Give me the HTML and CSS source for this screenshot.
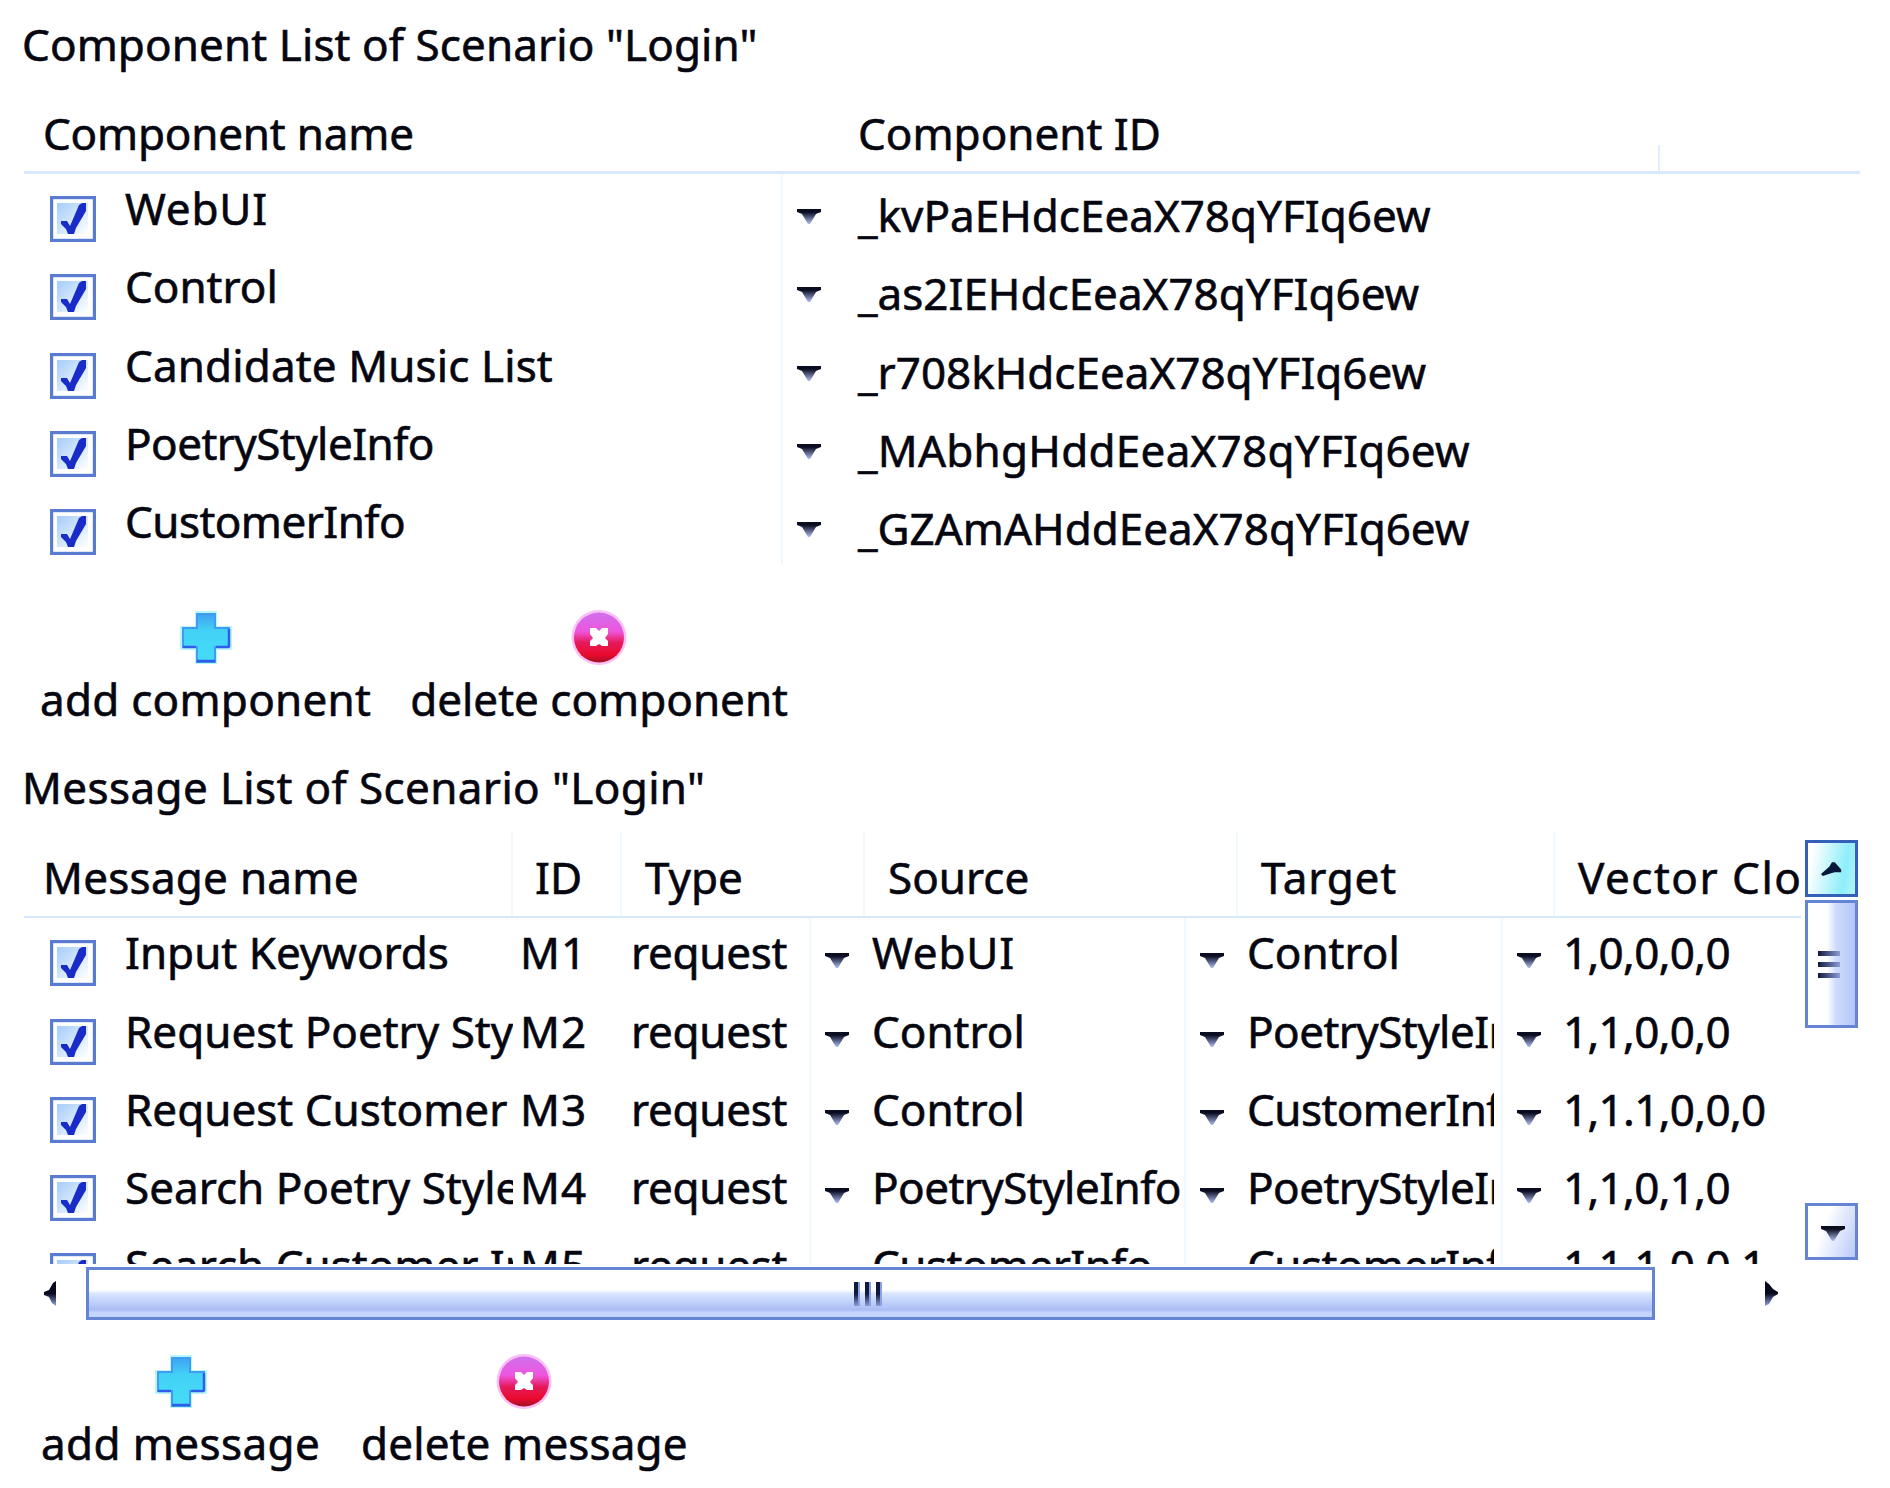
FILE: index.html
```
<!DOCTYPE html>
<html lang="en">
<head>
    <meta charset="UTF-8">
    <title>Scenario "Login"</title>
    <link rel="stylesheet" href="styles.css">
</head>
<body>
    <!-- Shared icons -->
    <svg class="defs" width="0" height="0">
        <defs>
            <linearGradient id="boxFill" x1="0" y1="0" x2="1" y2="1">
                <stop offset="0" stop-color="#a4ccfa"/>
                <stop offset="1" stop-color="#fff"/>
            </linearGradient>
            <linearGradient id="plusFill" x1="0" y1="0" x2="0" y2="1">
                <stop offset="0" stop-color="#3fa2f4"/>
                <stop offset="0.35" stop-color="#43d2f5"/>
                <stop offset="1" stop-color="#45dcf8"/>
            </linearGradient>
            <linearGradient id="crossFill" x1="0" y1="0" x2="0" y2="1">
                <stop offset="0" stop-color="#cf70ee"/>
                <stop offset="0.38" stop-color="#ee55dd"/>
                <stop offset="0.6" stop-color="#e51a5c"/>
                <stop offset="0.85" stop-color="#ea0a2c"/>
                <stop offset="1" stop-color="#a01028"/>
            </linearGradient>
            <linearGradient id="arrowFill" x1="0" y1="0" x2="0" y2="1">
                <stop offset="0.2" stop-color="#0a0c20"/>
                <stop offset="1" stop-color="#b0bef6"/>
            </linearGradient>
            <linearGradient id="sideFill" x1="0" y1="0" x2="0" y2="1">
                <stop offset="0.5" stop-color="#060a1c"/>
                <stop offset="1" stop-color="#93a6ee"/>
            </linearGradient>
        </defs>
        <symbol id="check" viewBox="0 0 46 46">
            <rect x="1.5" y="1.5" width="43" height="43" fill="#fff" stroke="#5a7cd0" stroke-width="3.4"/>
            <rect x="7" y="7" width="31" height="31" fill="url(#boxFill)"/>
            <path d="M11 25h6l3 5L29 9l3-2h4v8L26 32l-2 6h-6l-2-5-5-5z" fill="#1a2cc8"/>
        </symbol>
        <symbol id="down" viewBox="0 0 26 15">
            <path d="M1 0h24v3l-5 2-6 10h-2L6 5 1 3z" fill="url(#arrowFill)"/>
        </symbol>
        <symbol id="plus" viewBox="0 0 56 57">
            <path d="M17 2h22v15h15v24H39v14H17V41H2V17h15z" fill="#b9f6fb"/>
            <path d="M19 5h18v14h14v19H37v15H19V38H5V19h14z" fill="url(#plusFill)" stroke="#3f9cf0" stroke-width="2"/>
            <path d="M19 52h18M5 38h13M38 38h13M51 20v18" fill="none" stroke="#2f5cea" stroke-width="2.5"/>
        </symbol>
        <symbol id="cross" viewBox="0 0 56 57">
            <circle cx="28" cy="28.5" r="27.5" fill="#fbc0f6"/>
            <circle cx="28" cy="28.5" r="25" fill="url(#crossFill)"/>
            <path d="M19 19h6l3 3 3-3h6v6l-3 4 3 3v5h-6l-3-2-3 2h-6v-5l3-3-3-4z" fill="#fff"/>
        </symbol>
    </svg>

    <section class="components">
        <h1>Component List of Scenario "Login"</h1>
        <div class="head comp-head">
            <span>Component name</span>
            <span>Component ID</span>
            <span></span>
        </div>
        <div class="comp-row"><svg class="check"><use href="#check"/></svg><span class="w4">WebUI</span><i><svg class="down"><use href="#down"/></svg></i><span class="uid">_kvPaEHdcEeaX78qYFIq6ew</span></div>
        <div class="comp-row"><svg class="check"><use href="#check"/></svg><span>Control</span><i><svg class="down"><use href="#down"/></svg></i><span class="uid">_as2IEHdcEeaX78qYFIq6ew</span></div>
        <div class="comp-row"><svg class="check"><use href="#check"/></svg><span class="w1">Candidate Music List</span><i><svg class="down"><use href="#down"/></svg></i><span class="uid">_r708kHdcEeaX78qYFIq6ew</span></div>
        <div class="comp-row"><svg class="check"><use href="#check"/></svg><span class="n2">PoetryStyleInfo</span><i><svg class="down"><use href="#down"/></svg></i><span class="uid w2">_MAbhgHddEeaX78qYFIq6ew</span></div>
        <div class="comp-row"><svg class="check"><use href="#check"/></svg><span class="n2">CustomerInfo</span><i><svg class="down"><use href="#down"/></svg></i><span class="uid">_GZAmAHddEeaX78qYFIq6ew</span></div>
        <div class="tools">
            <div class="tool"><svg><use href="#plus"/></svg><span class="w2">add component</span></div>
            <div class="tool"><svg><use href="#cross"/></svg><span>delete component</span></div>
        </div>
    </section>

    <section class="messages">
        <h1 class="w3">Message List of Scenario "Login"</h1>
        <div class="list">
            <div class="view">
                <div class="head msg-head">
                    <span class="w2">Message name</span>
                    <span>ID</span>
                    <span>Type</span>
                    <span>Source</span>
                    <span class="w4">Target</span>
                    <span class="vc">Vector Clock</span>
                </div>
                <div class="rows">
                    <div class="msg-row"><svg class="check"><use href="#check"/></svg><span class="name">Input Keywords</span><span class="mid">M1</span><span class="type">request</span><i><svg class="down"><use href="#down"/></svg></i><span class="w4">WebUI</span><i><svg class="down"><use href="#down"/></svg></i><span class="target">Control</span><i><svg class="down"><use href="#down"/></svg></i><span class="clock">1,0,0,0,0</span></div>
                    <div class="msg-row"><svg class="check"><use href="#check"/></svg><span class="name">Request Poetry Style</span><span class="mid">M2</span><span class="type">request</span><i><svg class="down"><use href="#down"/></svg></i><span>Control</span><i><svg class="down"><use href="#down"/></svg></i><span class="target n2">PoetryStyleInfo</span><i><svg class="down"><use href="#down"/></svg></i><span class="clock">1,1,0,0,0</span></div>
                    <div class="msg-row"><svg class="check"><use href="#check"/></svg><span class="name">Request Customer Info</span><span class="mid">M3</span><span class="type">request</span><i><svg class="down"><use href="#down"/></svg></i><span>Control</span><i><svg class="down"><use href="#down"/></svg></i><span class="target n2">CustomerInfo</span><i><svg class="down"><use href="#down"/></svg></i><span class="clock">1,1.1,0,0,0</span></div>
                    <div class="msg-row"><svg class="check"><use href="#check"/></svg><span class="name">Search Poetry Style</span><span class="mid">M4</span><span class="type">request</span><i><svg class="down"><use href="#down"/></svg></i><span class="n2">PoetryStyleInfo</span><i><svg class="down"><use href="#down"/></svg></i><span class="target n2">PoetryStyleInfo</span><i><svg class="down"><use href="#down"/></svg></i><span class="clock">1,1,0,1,0</span></div>
                    <div class="msg-row"><svg class="check"><use href="#check"/></svg><span class="name">Search Customer Info</span><span class="mid">M5</span><span class="type">request</span><i></i><span class="n2">CustomerInfo</span><i></i><span class="target n2">CustomerInfo</span><i></i><span class="clock">1,1,1,0,0,1</span></div>
                </div>
            </div>
            <div class="vscroll">
                <div class="btn up"><svg width="22" height="14" viewBox="0 0 24 15"><path d="M0 13l9-8 3-5h3l7 8v3h-7l-4 1-9 3z" fill="#06183c"/></svg></div>
                <div class="vthumb"><b></b><b></b><b></b></div>
                <div class="btn dn"><svg class="down"><use href="#down"/></svg></div>
            </div>
        </div>
        <div class="hscroll">
            <svg class="left" viewBox="0 0 14 25"><path d="M13 0v25l-4-3-3-6-5-2v-3l5-2 4-7z" fill="url(#sideFill)"/></svg>
            <div class="hthumb"><b></b><b></b><b></b></div>
            <svg class="right" viewBox="0 0 14 25"><path d="M0 0v25l4-2 4-7 5-3v-2L8 8 4 3z" fill="url(#sideFill)"/></svg>
        </div>
        <div class="tools msg-tools">
            <div class="tool"><svg><use href="#plus"/></svg><span class="w3">add message</span></div>
            <div class="tool"><svg><use href="#cross"/></svg><span class="w1">delete message</span></div>
        </div>
    </section>
</body>
</html>
```
FILE: styles.css
```
* {
    box-sizing: border-box;
}
body {
    margin: 0;
    width: 1890px;
    height: 1488px;
    overflow: hidden;
    background: #fff;
    color: #05060f;
    font: 44px/69px "Noto Sans", sans-serif;
    -webkit-text-stroke: 0.6px #05060f;
    white-space: nowrap;
}
svg {
    display: block;
}
.defs {
    position: absolute;
}
h1 {
    margin: 0;
    padding-left: 22px;
    font-size: 44px;
    font-weight: normal;
    line-height: 88px;
    letter-spacing: 0.1px;
}

/* tracking */
.w1 {
    letter-spacing: 0.12px;
}
.w2 {
    letter-spacing: 0.25px;
}
.w3 {
    letter-spacing: 0.38px;
}
.w4 {
    letter-spacing: 0.8px;
}
.n2 {
    letter-spacing: -0.55px;
}

.head {
    display: grid;
    margin-left: 24px;
    line-height: 91px;
}
.comp-head {
    grid-template-columns: 810px 824px 202px;
    width: 1836px;
    height: 86px;
    border-bottom: 3px solid #d8e8ff;
}
.comp-head span {
    padding-left: 19px;
    letter-spacing: -0.2px;
}
.comp-head span + span {
    padding-left: 24px;
    letter-spacing: 0;
}
.comp-head span:last-child {
    height: 26px;
    margin-top: 57px;
    border-left: 2px solid #e2eeff;
}
.comp-row {
    display: grid;
    grid-template-columns: 125px 656px 77px 1fr;
    height: 78.25px;
}
.check {
    width: 46px;
    height: 46px;
    margin: 22px 0 0 50px;
}
i {
    padding: 35px 0 0 13px;
    border-left: 2px solid #f0f9ff;
}
.down {
    width: 26px;
    height: 15px;
}
.uid {
    padding-top: 7px;
}
.tools {
    display: flex;
    gap: 39px;
    padding: 44px 0 0 40px;
    line-height: 66px;
}
.tool {
    display: flex;
    flex-direction: column;
    align-items: center;
}
.tool svg {
    width: 56px;
    height: 57px;
}
.messages {
    margin-top: 11px;
}
.messages h1 {
    height: 88px;
    line-height: 89px;
}
.list {
    display: flex;
}
.view {
    width: 1805px;
    height: 433px;
    overflow: hidden;
}
.msg-head {
    grid-template-columns: 487px 109px 243px 373px 317px 248px;
    height: 87px;
    width: 1777px;
    line-height: 93px;
    border-bottom: 2px solid #d8e8ff;
    overflow: hidden;
}
.msg-head span {
    padding-left: 22px;
    border-left: 2px solid #f0f9ff;
}
.msg-head span:first-child {
    padding-left: 19px;
    border: 0;
}
.msg-head span + span + span {
    padding-left: 23px;
}
.msg-head .vc {
    margin-right: 1px;
    overflow: hidden;
    letter-spacing: 1.5px;
}
.rows {
    height: 346px;
    overflow: hidden;
}
.msg-row {
    display: grid;
    grid-template-columns: 125px 394px 112px 178px 63px 312px 63px 254px 62px 242px;
    height: 78.25px;
    line-height: 68px;
}
.name,
.target {
    overflow: hidden;
}
.name {
    margin-right: 6px;
}
.mid {
    padding-left: 1px;
    letter-spacing: 1.2px;
}
.type {
    letter-spacing: -0.3px;
}
.target {
    margin-right: 7px;
}
.clock {
    letter-spacing: -0.67px;
}
.vscroll {
    display: flex;
    flex-direction: column;
    width: 53px;
    height: 420px;
    margin-top: 9px;
}
.btn {
    display: flex;
    align-items: center;
    justify-content: center;
    height: 57px;
    border: 3px solid #6684d4;
    background: linear-gradient(110deg, #fff 35%, #b9caf9);
}
.up {
    border-color: #3460ba;
    background: linear-gradient(100deg, #fff 10%, #8eeefa 75%, #b4f4fb);
}
.dn {
    margin-top: auto;
}
.dn .down {
    margin: 3px 0 0 3px;
}
.vthumb {
    display: flex;
    flex-direction: column;
    align-items: center;
    justify-content: center;
    gap: 6px;
    height: 128px;
    margin-top: 3px;
    padding: 0 6px 0 0;
    border: 3px solid #6684d4;
    background: linear-gradient(90deg, #fff 40%, #cddcfc 60%, #b3c6f8);
}
.vthumb b {
    width: 22px;
    height: 5px;
    background: linear-gradient(90deg, #10183c, #8c9cd6);
}
.hscroll {
    display: flex;
    height: 53px;
    margin-top: 3px;
    padding-left: 43px;
}
.left,
.right {
    width: 14px;
    height: 25px;
    margin-top: 14px;
}
.hthumb {
    display: flex;
    justify-content: center;
    gap: 5px;
    width: 1569px;
    margin: 0 110px 0 29px;
    padding: 12px 6px 0 0;
    border: 3px solid #6684d4;
    background: linear-gradient(#fff 42%, #d9e7fe 50%, #aabcf6 85%, #c3d5fc 90%);
}
.hthumb b {
    width: 6px;
    height: 24px;
    background: linear-gradient(90deg, rgba(255, 255, 255, 0) 60%, #8ca0ea 60%), linear-gradient(#10183c 50%, #8c9cd6);
}
.msg-tools {
    gap: 41px;
    padding: 33px 0 0 41px;
}
```
